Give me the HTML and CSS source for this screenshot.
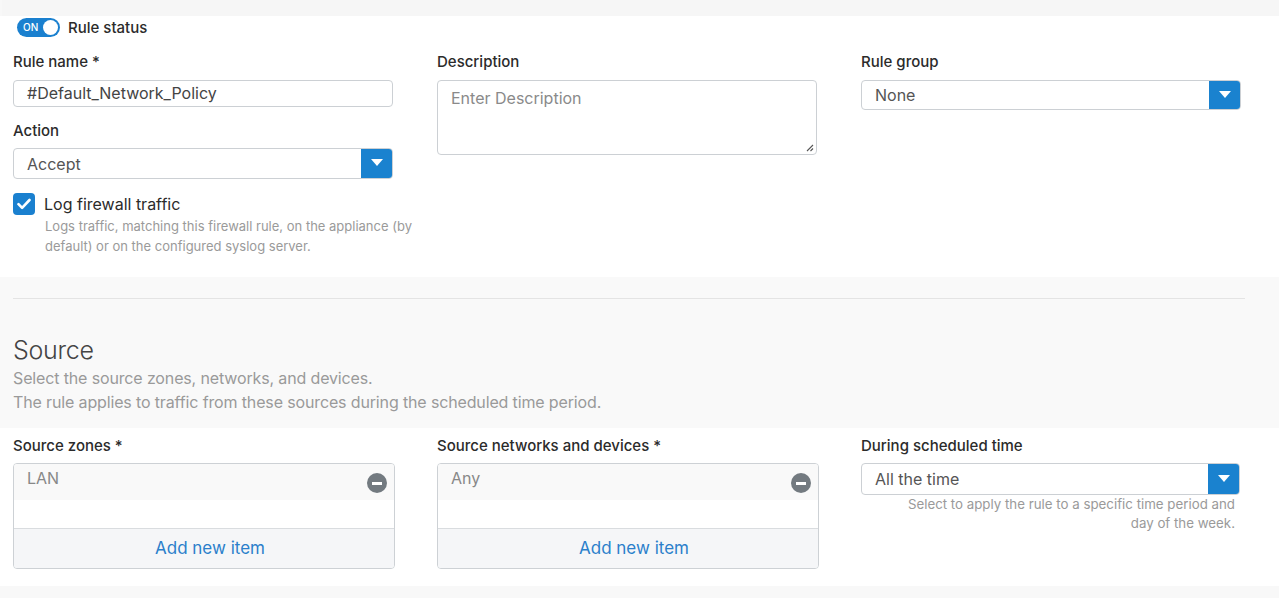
FILE: index.html
```html
<!DOCTYPE html>
<html lang="en">
  <head>
    <meta charset="UTF-8" />
    <meta name="viewport" content="width=device-width, initial-scale=1.0" />
    <title>Firewall rule</title>
    <link rel="stylesheet" href="styles.css">
  </head>
  <body>
    <div class="top-strip"></div>

    <div class="panel panel-rule">
      <div class="status-row">
        <div class="toggle"><span class="toggle-text">ON</span><span class="toggle-knob"></span></div>
        <span class="status-label">Rule status</span>
      </div>

      <div class="form-grid">
        <div class="col">
          <div class="label">Rule name *</div>
          <div class="input">#Default_Network_Policy</div>

          <div class="label label-next">Action</div>
          <div class="select select-tall">
            <span class="select-value">Accept</span>
            <span class="select-btn"><span class="arrow"></span></span>
          </div>

          <div class="check-row">
            <span class="checkbox">
              <svg width="14" height="12" viewBox="0 0 14 12"><path d="M1.5 6.2l3.6 3.6L12.5 2" fill="none" stroke="#fff" stroke-width="2.6" stroke-linecap="round" stroke-linejoin="round"/></svg>
            </span>
            <span class="check-label">Log firewall traffic</span>
          </div>
          <div class="help help-check">Logs traffic, matching this firewall rule, on the appliance (by default) or on the configured syslog server.</div>
        </div>

        <div class="col">
          <div class="label">Description</div>
          <div class="textarea">
            <span class="placeholder">Enter Description</span>
            <svg class="grip" width="9" height="9" viewBox="0 0 9 9"><path d="M8 2L2 8M8 5.5L5.5 8" stroke="#555" stroke-width="1.1"/></svg>
          </div>
        </div>

        <div class="col">
          <div class="label">Rule group</div>
          <div class="select">
            <span class="select-value">None</span>
            <span class="select-btn"><span class="arrow"></span></span>
          </div>
        </div>
      </div>
    </div>

    <div class="section-head">
      <div class="divider"></div>
      <h2 class="section-title">Source</h2>
      <p class="section-desc">Select the source zones, networks, and devices.<br>The rule applies to traffic from these sources during the scheduled time period.</p>
    </div>

    <div class="panel panel-source">
      <div class="form-grid">
        <div class="col">
          <div class="label">Source zones *</div>
          <div class="list-box">
            <div class="list-item">
              <span class="item-text">LAN</span>
              <span class="remove"></span>
            </div>
            <div class="list-blank"></div>
            <div class="list-add">Add new item</div>
          </div>
        </div>

        <div class="col">
          <div class="label">Source networks and devices *</div>
          <div class="list-box">
            <div class="list-item">
              <span class="item-text">Any</span>
              <span class="remove"></span>
            </div>
            <div class="list-blank"></div>
            <div class="list-add">Add new item</div>
          </div>
        </div>

        <div class="col">
          <div class="label">During scheduled time</div>
          <div class="select select-sched">
            <span class="select-value">All the time</span>
            <span class="select-btn"><span class="arrow"></span></span>
          </div>
          <div class="help help-right">Select to apply the rule to a specific time period and<br>day of the week.</div>
        </div>
      </div>
    </div>
  </body>
</html>
```

FILE: styles.css
```css
body {
  margin: 0;
  background: #f8f8f8;
  font-family: Inter, "Noto Sans", sans-serif;
  color: #2b2b2b;
  height: 598px;
  overflow: hidden;
}
.top-strip {
  height: 16px;
  margin-left: 2px;
  background: #f6f6f6;
}
.panel {
  background: #fff;
  padding: 0 13px;
  box-sizing: border-box;
}
.panel-rule {
  height: 261px;
  padding-top: 1px;
}
.panel-source {
  height: 158px;
  padding-top: 8px;
}
/* Status toggle */
.status-row {
  display: flex;
  align-items: center;
  height: 20px;
  margin-left: 4px;
}
.toggle {
  position: relative;
  width: 43px;
  height: 19px;
  border-radius: 10px;
  background: #1a80cf;
  box-sizing: border-box;
}
.toggle-text {
  position: absolute;
  left: 6px;
  top: 3px;
  font-size: 10px;
  line-height: 13px;
  color: #fff;
  font-weight: 500;
}
.toggle-knob {
  position: absolute;
  right: 2px;
  top: 2px;
  width: 15px;
  height: 15px;
  border-radius: 50%;
  background: #fff;
}
.status-label {
  margin-left: 8px;
  font-size: 15px;
  font-weight: 500;
  color: #2b2b2b;
}
/* Grid */
.form-grid {
  display: grid;
  grid-template-columns: 380px 380px 380px;
  column-gap: 44px;
}
.panel-rule .form-grid {
  margin-top: 15px;
}
.label {
  font-size: 15px;
  font-weight: 500;
  line-height: 20px;
  color: #2b2b2b;
  margin-bottom: 8px;
}
.panel-source .label {
  margin-bottom: 7px;
}
.label-next {
  margin-top: 14px;
  margin-bottom: 7px;
}
.input,
.select,
.textarea {
  box-sizing: border-box;
  border: 1px solid #ccd0d4;
  border-radius: 4px;
  background: #fff;
  font-size: 16px;
  color: #555;
}
.input {
  height: 27px;
  line-height: 25px;
  padding-left: 13px;
  color: #444;
}
.select {
  display: flex;
  align-items: center;
  height: 30px;
  overflow: hidden;
}
.select-tall {
  height: 31px;
}
.select-sched {
  height: 32px;
  width: 379px;
}
.select-value {
  flex: 1;
  padding-left: 13px;
}
.select-btn {
  width: 32px;
  align-self: stretch;
  margin: -1px -1px -1px 0;
  background: #1a82cf;
  display: flex;
  align-items: center;
  justify-content: center;
}
.arrow {
  width: 0;
  height: 0;
  border-left: 6px solid transparent;
  border-right: 6px solid transparent;
  border-top: 7px solid #fff;
  margin-top: -2px;
}
.textarea {
  position: relative;
  height: 75px;
  padding: 7px 13px;
}
.placeholder {
  color: #8a8a8a;
}
.grip {
  position: absolute;
  right: 2px;
  bottom: 2px;
}
/* Checkbox */
.check-row {
  display: flex;
  align-items: center;
  margin-top: 14px;
  height: 22px;
}
.checkbox {
  width: 22px;
  height: 22px;
  border-radius: 4px;
  background: #1a80cf;
  display: flex;
  align-items: center;
  justify-content: center;
}
.check-label {
  margin-left: 9px;
  font-size: 16px;
  color: #2b2b2b;
}
.help {
  font-size: 13px;
  line-height: 20px;
  color: #9a9a9a;
}
.help-check {
  margin-top: 1px;
  padding-left: 32px;
  width: 385px;
}
.help-right {
  text-align: right;
  padding-right: 6px;
  line-height: 19px;
  margin-top: 0;
  font-size: 13.3px;
}
/* Source header */
.section-head {
  height: 151px;
  padding: 21px 13px 0;
  box-sizing: border-box;
  background: #f9f9f9;
}
.divider {
  width: 1232px;
  height: 1px;
  background: #e4e4e4;
}
.section-title {
  margin: 36px 0 0;
  font-size: 25px;
  font-weight: 300;
  line-height: 31px;
  color: #444;
  letter-spacing: -0.3px;
}
.section-desc {
  margin: 0;
  font-size: 16px;
  line-height: 24px;
  color: #9a9a9a;
  letter-spacing: -0.14px;
}
/* Lists */
.list-box {
  width: 382px;
  box-sizing: border-box;
  border: 1px solid #cdd1d5;
  border-radius: 4px;
  overflow: hidden;
  background: #fff;
}
.list-item {
  height: 36px;
  background: #f9f9f9;
  display: flex;
  align-items: flex-start;
  justify-content: space-between;
  padding: 4px 7px 0 13px;
  box-sizing: border-box;
}
.item-text {
  font-size: 16px;
  line-height: 20px;
  color: #888;
}
.remove {
  position: relative;
  width: 20px;
  height: 20px;
  margin-top: 5px;
  border-radius: 50%;
  background: #737a80;
}
.remove::after {
  content: "";
  position: absolute;
  left: 5px;
  top: 8.5px;
  width: 10px;
  height: 3px;
  background: #fff;
}
.list-blank {
  height: 28px;
  border-bottom: 1px solid #d9dcdf;
}
.list-add {
  height: 39px;
  line-height: 39px;
  text-align: center;
  padding-left: 12px;
  background: #f5f6f8;
  font-size: 17px;
  color: #2b7fcb;
}
```
